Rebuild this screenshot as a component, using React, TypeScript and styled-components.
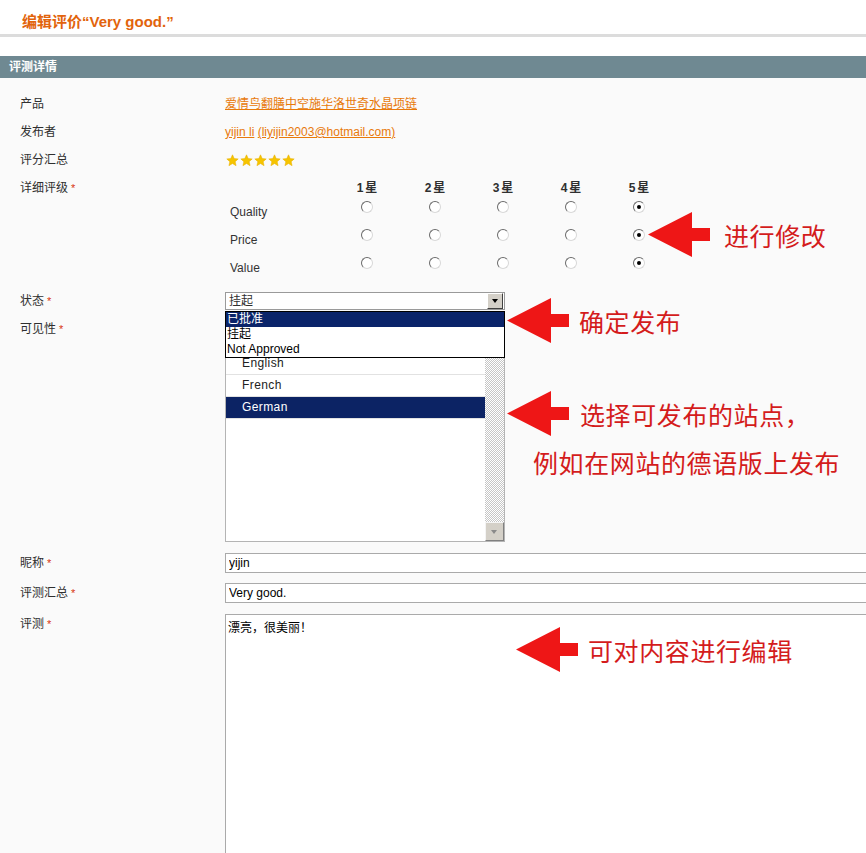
import React from 'react';
import styled, { createGlobalStyle } from 'styled-components';

const GlobalStyle = createGlobalStyle`
  html, body {
    margin: 0;
    padding: 0;
    background: #fafafa;
  }
  body {
    font-family: "Liberation Sans", "Noto Sans CJK SC", sans-serif;
    font-size: 12px;
    color: #2f2f2f;
  }
`;

const Page = styled.div`
  position: relative;
  width: 866px;
  height: 853px;
  overflow: hidden;
  background: #fafafa;
`;

const TitleBar = styled.div`
  height: 28px;
  padding: 6px 0 0 22px;
  background: #fff;
  border-bottom: 3px solid #dcdcdc;
  display: flex;
  align-items: center;
`;

const Title = styled.h3`
  margin: 0;
  font-size: 15px;
  font-weight: bold;
  color: #e2640c;
`;

const Gap = styled.div`
  height: 19px;
  background: #fff;
`;

const SectionHead = styled.div`
  height: 22px;
  line-height: 22px;
  padding-left: 9px;
  background: #6f8992;
  color: #fff;
  font-weight: bold;
  font-size: 12px;
`;

const Form = styled.div`
  padding: 12px 0 0 20px;
`;

type RowProps = { $pt?: number; $pb?: number };
const Row = styled.div<RowProps>`
  display: grid;
  grid-template-columns: 205px 1fr;
  align-items: start;
  padding-top: ${(p) => (p.$pt !== undefined ? p.$pt : 5)}px;
  padding-bottom: ${(p) => (p.$pb !== undefined ? p.$pb : 5)}px;
`;

const Label = styled.div<{ $lh?: number }>`
  line-height: ${(p) => p.$lh || 18}px;
  color: #2f2f2f;
`;

const Req = styled.span`
  color: #d8340f;
  font-size: 11px;
  margin-left: 3px;
`;

const Value = styled.div`
  line-height: 18px;
  position: relative;
`;

const Link = styled.a`
  color: #e8790a;
  text-decoration: underline;
  cursor: pointer;
`;

const Stars = styled.div`
  display: flex;
  gap: 1px;
  height: 18px;
  align-items: center;
  padding-left: 1px;
`;

const RatingGrid = styled.div`
  display: grid;
  grid-template-columns: 108px repeat(5, 68px);
  grid-template-rows: 19px repeat(3, 28px);
`;

const HeadCell = styled.div`
  text-align: center;
  font-weight: bold;
  line-height: 18px;
  letter-spacing: 2px;
  padding-left: 2px;
`;

const RateLabel = styled.div`
  padding-left: 5px;
  line-height: 28px;
  color: #333;
`;

const RadioCell = styled.div`
  display: flex;
  justify-content: center;
  align-items: center;
  padding-bottom: 10px;
`;

const Radio = styled.span<{ $on?: boolean }>`
  position: relative;
  display: inline-block;
  width: 12px;
  height: 12px;
  box-sizing: border-box;
  border-radius: 50%;
  border: 1px solid;
  border-color: #6a6a6a #d8d8d8 #d8d8d8 #6a6a6a;
  background: #fff;
  &::after {
    content: '';
    display: ${(p) => (p.$on ? 'block' : 'none')};
    position: absolute;
    left: 3px;
    top: 3px;
    width: 4px;
    height: 4px;
    border-radius: 50%;
    background: #000;
  }
`;

const SelectBox = styled.div`
  position: relative;
  width: 280px;
  height: 18px;
  box-sizing: border-box;
  border: 1px solid #9a9a9a;
  background: #fff;
  line-height: 16px;
  padding-left: 3px;
`;

const SelectButton = styled.span`
  position: absolute;
  right: 1px;
  top: 0px;
  width: 16px;
  height: 16px;
  box-sizing: border-box;
  background: #d4d0c8;
  border: 1px solid;
  border-color: #fff #404040 #404040 #fff;
  &::after {
    content: '';
    position: absolute;
    left: 4px;
    top: 5px;
    border-left: 3.5px solid transparent;
    border-right: 3.5px solid transparent;
    border-top: 4px solid #000;
  }
`;

const DropList = styled.div`
  position: absolute;
  left: 0;
  top: 19px;
  width: 280px;
  box-sizing: border-box;
  border: 1px solid #000;
  background: #fff;
  z-index: 3;
`;

const DropItem = styled.div<{ $active?: boolean }>`
  height: 15px;
  line-height: 15px;
  padding-left: 1px;
  background: ${(p) => (p.$active ? '#0a246a' : '#fff')};
  color: ${(p) => (p.$active ? '#fff' : '#000')};
`;

const MultiBox = styled.div`
  width: 280px;
  height: 222px;
  box-sizing: border-box;
  border: 1px solid #b4b4b4;
  background: #fff;
  display: flex;
`;

const MultiList = styled.div`
  flex: 1;
  padding-top: 32px;
`;

const MultiItem = styled.div<{ $active?: boolean }>`
  height: 21px;
  line-height: 21px;
  padding-left: 16px;
  border-bottom: 1px solid #e2e2e2;
  letter-spacing: 0.4px;
  background: ${(p) => (p.$active ? '#0c2364' : 'transparent')};
  color: ${(p) => (p.$active ? '#fff' : '#222')};
`;

const ScrollTrack = styled.div`
  width: 19px;
  display: flex;
  flex-direction: column;
  justify-content: space-between;
  background: repeating-conic-gradient(#c6c6c6 0 25%, #fff 0 50%) 0 0 / 2px 2px;
`;

const ScrollButton = styled.div<{ $up?: boolean }>`
  position: relative;
  width: 19px;
  height: 19px;
  box-sizing: border-box;
  background: #d4d0c8;
  border: 1px solid;
  border-color: #f4f4f4 #808080 #808080 #f4f4f4;
  &::after {
    content: '';
    position: absolute;
    left: 5px;
    top: 7px;
    border-left: 3.5px solid transparent;
    border-right: 3.5px solid transparent;
    ${(p) => (p.$up ? 'border-bottom: 4px solid #8a8a8a;' : 'border-top: 4px solid #8a8a8a;')}
  }
`;

const TextInput = styled.input`
  display: block;
  width: 700px;
  height: 20px;
  box-sizing: border-box;
  margin: 0;
  padding: 0 3px;
  border: 1px solid #aaa;
  background: #fff;
  font: inherit;
  color: #000;
  outline: none;
`;

const TextArea = styled.textarea`
  display: block;
  width: 700px;
  height: 300px;
  box-sizing: border-box;
  margin: 0;
  padding: 3px 2px;
  border: 1px solid #aaa;
  background: #fff;
  font: inherit;
  color: #000;
  resize: none;
  outline: none;
`;

const Callout = styled.div<{ $left: number; $top: number; $gap: number }>`
  position: absolute;
  left: ${(p) => p.$left}px;
  top: ${(p) => p.$top}px;
  display: flex;
  align-items: center;
  gap: ${(p) => p.$gap}px;
  z-index: 5;
`;

const Note = styled.span`
  font-family: "Noto Sans CJK SC", "Liberation Sans", sans-serif;
  font-size: 25px;
  line-height: 30px;
  letter-spacing: 0.6px;
  color: #d41c1c;
  white-space: nowrap;
`;

const FreeNote = styled(Note)<{ $left: number; $top: number }>`
  position: absolute;
  left: ${(p) => p.$left}px;
  top: ${(p) => p.$top}px;
  z-index: 5;
`;

const Star = () => (
  <svg width="13" height="13" viewBox="0 0 24 24">
    <path
      d="M12 1.5l3.1 6.9 7.4.7-5.6 5 1.7 7.4L12 17.6l-6.6 3.9 1.7-7.4-5.6-5 7.4-.7z"
      fill="#f6c400"
      stroke="#e8b000"
      strokeWidth="1"
    />
  </svg>
);

const Arrow = () => (
  <svg width="62" height="45" viewBox="0 0 62 45">
    <polygon points="0,22.5 44,0 44,16 62,16 62,29 44,29 44,45" fill="#ee1616" />
  </svg>
);

const ratingRows = ['Quality', 'Price', 'Value'];
const ratingHeads = ['1星', '2星', '3星', '4星', '5星'];

const App = () => {
  return (
    <Page>
      <GlobalStyle />
      <TitleBar>
        <Title>编辑评价“Very good.”</Title>
      </TitleBar>
      <Gap />
      <SectionHead>评测详情</SectionHead>
      <Form>
        <Row>
          <Label>产品</Label>
          <Value>
            <Link>爱情鸟翻膳中空施华洛世奇水晶项链</Link>
          </Value>
        </Row>
        <Row>
          <Label>发布者</Label>
          <Value>
            <Link>yijin li</Link> <Link>(liyijin2003@hotmail.com)</Link>
          </Value>
        </Row>
        <Row>
          <Label>评分汇总</Label>
          <Stars>
            {[0, 1, 2, 3, 4].map((i) => (
              <Star key={i} />
            ))}
          </Stars>
        </Row>
        <Row>
          <Label>
            详细评级<Req>*</Req>
          </Label>
          <RatingGrid>
            <div />
            {ratingHeads.map((h) => (
              <HeadCell key={h}>{h}</HeadCell>
            ))}
            {ratingRows.map((r) => (
              <React.Fragment key={r}>
                <RateLabel>{r}</RateLabel>
                {ratingHeads.map((h, i) => (
                  <RadioCell key={h}>
                    <Radio $on={i === 4} />
                  </RadioCell>
                ))}
              </React.Fragment>
            ))}
          </RatingGrid>
        </Row>
        <Row>
          <Label>
            状态<Req>*</Req>
          </Label>
          <Value>
            <SelectBox>
              挂起
              <SelectButton />
            </SelectBox>
            <DropList>
              <DropItem $active>已批准</DropItem>
              <DropItem>挂起</DropItem>
              <DropItem>Not Approved</DropItem>
            </DropList>
          </Value>
        </Row>
        <Row $pb={6}>
          <Label>
            可见性<Req>*</Req>
          </Label>
          <MultiBox>
            <MultiList>
              <MultiItem>English</MultiItem>
              <MultiItem>French</MultiItem>
              <MultiItem $active>German</MultiItem>
            </MultiList>
            <ScrollTrack>
              <ScrollButton $up />
              <ScrollButton />
            </ScrollTrack>
          </MultiBox>
        </Row>
        <Row>
          <Label $lh={20}>
            昵称<Req>*</Req>
          </Label>
          <TextInput readOnly value="yijin" />
        </Row>
        <Row>
          <Label $lh={20}>
            评测汇总<Req>*</Req>
          </Label>
          <TextInput readOnly value="Very good." />
        </Row>
        <Row $pt={6}>
          <Label $lh={20}>
            评测<Req>*</Req>
          </Label>
          <TextArea readOnly value="漂亮，很美丽！" />
        </Row>
      </Form>

      <Callout $left={648} $top={212} $gap={14}>
        <Arrow />
        <Note>进行修改</Note>
      </Callout>
      <Callout $left={507} $top={298} $gap={10}>
        <Arrow />
        <Note>确定发布</Note>
      </Callout>
      <Callout $left={507} $top={391} $gap={11}>
        <Arrow />
        <Note>选择可发布的站点，</Note>
      </Callout>
      <FreeNote $left={533} $top={447}>例如在网站的德语版上发布</FreeNote>
      <Callout $left={516} $top={627} $gap={10}>
        <Arrow />
        <Note>可对内容进行编辑</Note>
      </Callout>
    </Page>
  );
};

export default App;
